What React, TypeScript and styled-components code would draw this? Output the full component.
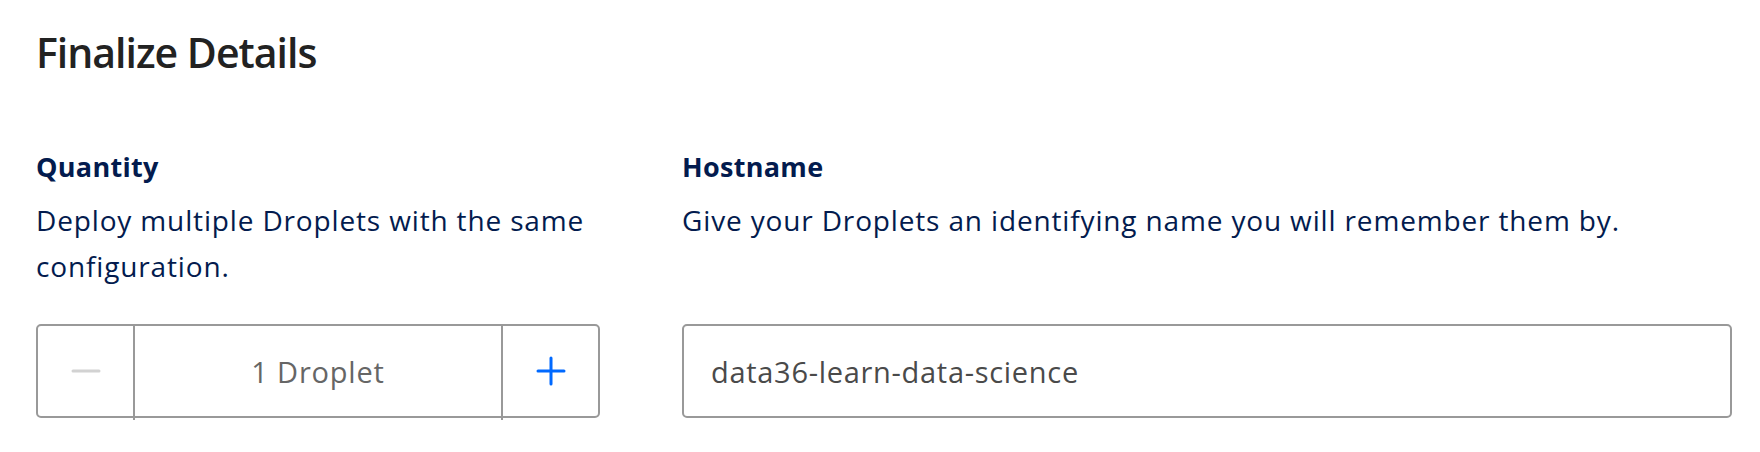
import React from "react";
import styled, { createGlobalStyle } from "styled-components";

const GlobalStyle = createGlobalStyle`
  html, body {
    margin: 0;
    padding: 0;
    background: #ffffff;
  }
  body {
    font-family: "Open Sans", "Noto Sans", sans-serif;
    -webkit-font-smoothing: antialiased;
  }
  * { box-sizing: border-box; }
`;

const Page = styled.section`
  padding: 24px 28px 0 36px;
  width: 1760px;
  height: 452px;
`;

const Title = styled.h2`
  margin: 0;
  font-size: 41px;
  line-height: 56px;
  font-weight: 600;
  color: #222222;
  letter-spacing: -1px;
`;

const Columns = styled.div`
  display: flex;
  align-items: stretch;
  gap: 82px;
  margin-top: 69px;
`;

const Field = styled.div<{ $width: number }>`
  display: flex;
  flex-direction: column;
  width: ${(p) => p.$width}px;
`;

const Label = styled.h3`
  margin: 0;
  font-size: 27px;
  line-height: 36px;
  font-weight: 700;
  color: #031b4e;
  letter-spacing: 0.3px;
`;

const Description = styled.p`
  margin: 13px 0 35px;
  font-size: 28px;
  line-height: 45.6px;
  font-weight: 400;
  color: #031b4e;
  letter-spacing: 0.85px;
`;

const Control = styled.div`
  margin-top: auto;
  height: 94px;
  border: 2px solid #999999;
  border-radius: 5px;
  display: flex;
  background: #ffffff;
`;

const StepButton = styled.button`
  width: 95px;
  flex: 0 0 95px;
  border: 0;
  background: transparent;
  padding: 0;
  display: flex;
  align-items: center;
  justify-content: center;
  cursor: pointer;
`;

const StepValue = styled.div`
  flex: 1;
  margin: -2px 0 -4px;
  border-left: 2px solid #999999;
  border-right: 2px solid #999999;
  display: flex;
  align-items: center;
  justify-content: center;
  font-size: 29px;
  letter-spacing: 0.8px;
  color: #666666;
  padding-bottom: 2px;
`;

const TextInput = styled.div`
  flex: 1;
  display: flex;
  align-items: center;
  padding-left: 27px;
  font-size: 29px;
  letter-spacing: 0.7px;
  color: #4a4a4a;
`;

const MinusIcon = () => (
  <svg width="30" height="6" viewBox="0 0 30 6">
    <line x1="2" y1="3" x2="28" y2="3" stroke="#d2d2d2" strokeWidth="3" strokeLinecap="round" />
  </svg>
);

const PlusIcon = () => (
  <svg width="30" height="30" viewBox="0 0 30 30">
    <line x1="2" y1="15" x2="28" y2="15" stroke="#0069ff" strokeWidth="3" strokeLinecap="round" />
    <line x1="15" y1="2" x2="15" y2="28" stroke="#0069ff" strokeWidth="3" strokeLinecap="round" />
  </svg>
);

export default function App() {
  return (
    <>
      <GlobalStyle />
      <Page>
        <Title>Finalize Details</Title>
        <Columns>
          <Field $width={564}>
            <Label>Quantity</Label>
            <Description>Deploy multiple Droplets with the same configuration.</Description>
            <Control>
              <StepButton aria-label="Decrease">
                <MinusIcon />
              </StepButton>
              <StepValue>1 Droplet</StepValue>
              <StepButton aria-label="Increase">
                <PlusIcon />
              </StepButton>
            </Control>
          </Field>
          <Field $width={1050}>
            <Label>Hostname</Label>
            <Description>Give your Droplets an identifying name you will remember them by.</Description>
            <Control>
              <TextInput>data36-learn-data-science</TextInput>
            </Control>
          </Field>
        </Columns>
      </Page>
    </>
  );
}
